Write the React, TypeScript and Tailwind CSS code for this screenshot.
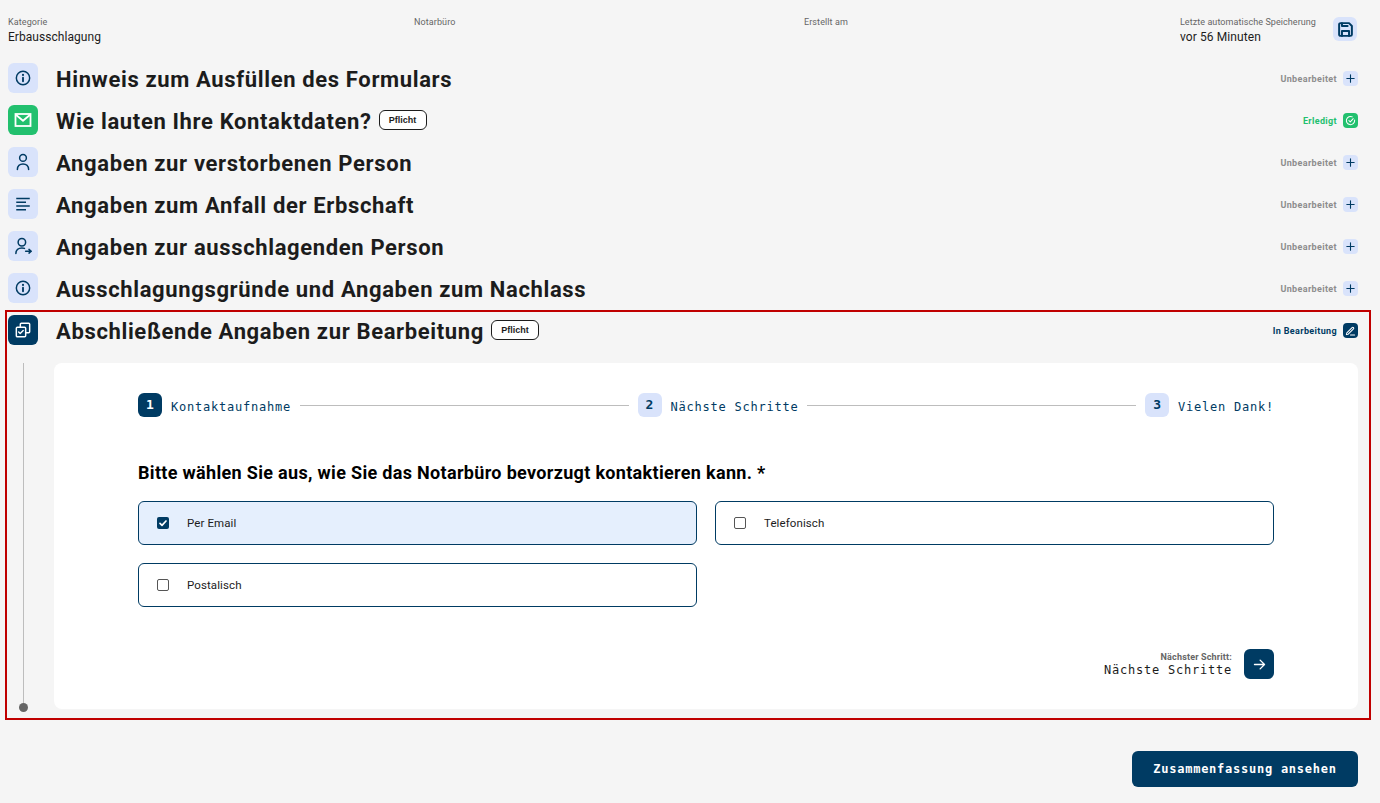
import React from "react";

const NAVY = "#003b63";

function Svg({ size = 16, children, color = NAVY, sw = 2 }: { size?: number; children: React.ReactNode; color?: string; sw?: number }) {
  return (
    <svg width={size} height={size} viewBox="0 0 24 24" fill="none" stroke={color} strokeWidth={sw} strokeLinecap="round" strokeLinejoin="round">
      {children}
    </svg>
  );
}

const InfoI = () => (
  <Svg sw={2.2}>
    <circle cx="12" cy="12" r="10" />
    <path d="M12 11.5v5.5" strokeWidth={2.8} />
    <path d="M12 7.4h.01" strokeWidth={3.2} />
  </Svg>
);
const MailI = () => (
  <Svg size={18} color="#fff" sw={2.4}>
    <rect x="2" y="4" width="20" height="16" strokeLinejoin="miter" />
    <path d="M2.5 5l9.5 8 9.5-8" strokeLinecap="butt" />
  </Svg>
);
const UserI = () => (
  <Svg size={18} sw={2}>
    <circle cx="12" cy="6.5" r="4.500" />
    <path d="M4.500 22c0-4.600 3.200-7.500 7.500-7.500s7.500 2.900 7.500 7.500" />
  </Svg>
);
const LinesI = () => (
  <Svg size={18} sw={2}>
    <path d="M3 4.500h18M3 9.500h13M3 14.500h18M3 19.500h13" strokeLinecap="butt" />
  </Svg>
);
const UserArrowI = () => (
  <Svg size={18} sw={2}>
    <circle cx="10.500" cy="7" r="5" />
    <path d="M2.500 22c0-4.600 3.500-7.500 8-7.500 1.300 0 2.500.2 3.500.7" />
    <path d="M15.500 19h7.500M20 16.500l3 2.500-3 2.500" />
  </Svg>
);
const CopyCheckI = () => (
  <Svg size={16} color="#fff" sw={2.200}>
    <rect x="2" y="8" width="14" height="14" rx="1.500" />
    <path d="M8 8V3.500C8 2.700 8.700 2 9.500 2h11c.8 0 1.500.7 1.500 1.500v11c0 .8-.7 1.500-1.500 1.500H16" />
    <path d="M5.500 15l2.300 2.300 4.500-4.500" />
  </Svg>
);
const SaveI = () => (
  <Svg size={17} sw={2.8}>
    <path d="M3 5c0-1.100.9-2 2-2h12l4 4v12c0 1.100-.9 2-2 2H5c-1.100 0-2-.9-2-2z" />
    <path d="M7 21v-7h10v7" />
    <path d="M7 3v4h8" />
  </Svg>
);
const PlusI = () => (
  <Svg size={11} sw={2.400}>
    <path d="M12 4v16M4 12h16" />
  </Svg>
);
const CheckCircleI = () => (
  <Svg size={11} color="#fff" sw={2.200}>
    <path d="M21 11v1a9 9 0 1 1-5-8" />
    <path d="M8.500 12l3 3 6.500-7" />
  </Svg>
);
const PencilI = () => (
  <Svg size={11} color="#fff" sw={2.200}>
    <path d="M4 17L15.500 5.500a2 2 0 0 1 3 3L7 20l-4 1z" />
    <path d="M12 22h9" />
  </Svg>
);

type Row = { title: string; icon: React.ReactNode; tone: "todo" | "done" | "edit"; pflicht?: boolean };
const rows: Row[] = [
  { title: "Hinweis zum Ausfüllen des Formulars", icon: <InfoI />, tone: "todo" },
  { title: "Wie lauten Ihre Kontaktdaten?", icon: <MailI />, tone: "done", pflicht: true },
  { title: "Angaben zur verstorbenen Person", icon: <UserI />, tone: "todo" },
  { title: "Angaben zum Anfall der Erbschaft", icon: <LinesI />, tone: "todo" },
  { title: "Angaben zur ausschlagenden Person", icon: <UserArrowI />, tone: "todo" },
  { title: "Ausschlagungsgründe und Angaben zum Nachlass", icon: <InfoI />, tone: "todo" },
];

function Pflicht() {
  return (
    <span className="ml-[7px] flex h-[20px] w-[48px] items-center justify-center rounded-[6px] border border-[#1c1c1c] bg-white pt-px font-['Liberation_Sans',sans-serif] text-[9px] font-bold text-[#1c1c1c]">
      Pflicht
    </span>
  );
}

function SectionRow({ title, icon, tone, pflicht }: Row) {
  const iconBg = tone === "done" ? "bg-[#22c06e]" : tone === "edit" ? "bg-[#003b63]" : "bg-[#d9e3fb]";
  const statusBg = tone === "done" ? "bg-[#22c06e]" : tone === "edit" ? "bg-[#003b63]" : "bg-[#d9e3fb]";
  const statusText = tone === "done" ? "text-[#22c06e]" : tone === "edit" ? "text-[#003b63]" : "text-[#8d8d8d]";
  const label = tone === "done" ? "Erledigt" : tone === "edit" ? "In Bearbeitung" : "Unbearbeitet";
  return (
    <div className="flex h-[30px] items-center">
      <div className={`flex h-[30px] w-[30px] shrink-0 items-center justify-center rounded-[6px] ${iconBg}`}>{icon}</div>
      <h2 className="ml-[18px] pt-[4px] text-[22px] font-bold leading-[30px] tracking-[0.64px] text-[#1c1c1c]">{title}</h2>
      {pflicht && <Pflicht />}
      <div className="ml-auto flex items-center gap-[6px]">
        <span className={`pt-[3px] text-[9px] font-bold tracking-[0.36px] ${statusText}`}>{label}</span>
        <span className={`flex h-[15px] w-[15px] items-center justify-center rounded-[4px] ${statusBg}`}>
          {tone === "todo" ? <PlusI /> : tone === "done" ? <CheckCircleI /> : <PencilI />}
        </span>
      </div>
    </div>
  );
}

function Step({ n, label, active }: { n: number; label: string; active?: boolean }) {
  return (
    <div className="flex shrink-0 items-center gap-[9px]">
      <span
        className={`flex h-[24px] w-[24px] items-center justify-center rounded-[6px] font-['DejaVu_Sans_Mono',monospace] text-[13px] font-bold ${
          active ? "bg-[#003b63] text-white" : "bg-[#d9e3fb] text-[#003b63]"
        }`}
      >
        {n}
      </span>
      <span className="pt-[3px] font-['DejaVu_Sans_Mono',monospace] text-[12px] tracking-[0.77px] text-[#003b63]">{label}</span>
    </div>
  );
}

function Option({ label, checked }: { label: string; checked?: boolean }) {
  return (
    <div
      className={`flex h-[44px] items-center rounded-[6px] border border-[#003b63] pl-[18px] ${
        checked ? "bg-[#e5effd]" : "bg-white"
      }`}
    >
      {checked ? (
        <span className="flex h-[12px] w-[12px] items-center justify-center rounded-[2px] bg-[#003b63]">
          <svg width="8" height="8" viewBox="0 0 24 24" fill="none" stroke="#fff" strokeWidth={5} strokeLinecap="round" strokeLinejoin="round">
            <path d="M3 13l6 6L21 6" />
          </svg>
        </span>
      ) : (
        <span className="h-[12px] w-[12px] rounded-[2px] border border-[#555] bg-white" />
      )}
      <span className="ml-[18px] pt-[2px] text-[11.5px] tracking-[0.1px] text-[#1c1c1c]">{label}</span>
    </div>
  );
}

export default function App() {
  return (
    <div className="h-[803px] overflow-hidden bg-[#f5f5f5] pl-[8px] pr-[22px] pt-[17px] font-['Roboto',sans-serif]">
      <header className="grid h-[25px] grid-cols-[406px_390px_1fr_auto] items-start">
        <div>
          <div className="text-[9px] leading-[10px] tracking-[0.1px] text-[#666]">Kategorie</div>
          <div className="mt-[3px] text-[12px] leading-[14px] tracking-[0.05px] text-[#1c1c1c]">Erbausschlagung</div>
        </div>
        <div className="text-[9px] leading-[10px] tracking-[0.1px] text-[#666]">Notarbüro</div>
        <div className="text-[9px] leading-[10px] tracking-[0.1px] text-[#666]">Erstellt am</div>
        <div className="flex items-start gap-[17px]">
          <div>
            <div className="text-[9px] leading-[10px] tracking-[0.07px] text-[#666]">Letzte automatische Speicherung</div>
            <div className="mt-[3px] text-[12px] leading-[14px] tracking-[0.1px] text-[#1c1c1c]">vor 56 Minuten</div>
          </div>
          <button className="mr-[1px] flex h-[24px] w-[24px] items-center justify-center rounded-[6px] bg-[#d9e3fb]">
            <SaveI />
          </button>
        </div>
      </header>

      <div className="mt-[21px] flex flex-col gap-[12px]">
        {rows.map((r) => (
          <SectionRow key={r.title} {...r} />
        ))}
      </div>

      <section className="ml-[-3px] mr-[-13px] mt-[7px] h-[410px] border-2 border-[#c00000] pl-[1px] pr-[11px] pt-[3px]">
        <SectionRow title="Abschließende Angaben zur Bearbeitung" icon={<CopyCheckI />} tone="edit" pflicht />
        <div className="mt-[18px] flex h-[346px]">
          <div className="mb-[-3px] flex w-[30px] shrink-0 flex-col items-center">
            <div className="w-px flex-1 bg-[#bdbdbd]" />
            <div className="h-[9px] w-[9px] rounded-full bg-[#666]" />
          </div>
          <div className="ml-[16px] flex-1 rounded-[8px] bg-white px-[84px] pt-[30px]">
            <div className="flex items-center">
              <Step n={1} label="Kontaktaufnahme" active />
              <div className="mx-[9px] h-px flex-1 bg-[#bdbdbd]" />
              <Step n={2} label="Nächste Schritte" />
              <div className="mx-[9px] h-px flex-1 bg-[#bdbdbd]" />
              <Step n={3} label="Vielen Dank!" />
            </div>
            <h3 className="mt-[43px] pt-[2px] text-[18px] font-bold leading-[22px] tracking-[0.32px] text-black">
              Bitte wählen Sie aus, wie Sie das Notarbüro bevorzugt kontaktieren kann. *
            </h3>
            <div className="mt-[17px] grid grid-cols-2 gap-[18px]">
              <Option label="Per Email" checked />
              <Option label="Telefonisch" />
              <Option label="Postalisch" />
            </div>
            <div className="mt-[42px] flex items-center justify-end gap-[12px]">
              <div className="text-right">
                <div className="pt-px text-[9px] font-bold leading-[10px] tracking-[0.17px] text-[#666]">Nächster Schritt:</div>
                <div className="mt-[1px] font-['DejaVu_Sans_Mono',monospace] text-[12px] leading-[14px] tracking-[0.77px] text-[#1c1c1c]">Nächste Schritte</div>
              </div>
              <button className="flex h-[30px] w-[30px] items-center justify-center rounded-[6px] bg-[#003b63]">
                <svg width="15" height="15" viewBox="0 0 24 24" fill="none" stroke="#fff" strokeWidth={2.200} strokeLinecap="round" strokeLinejoin="round">
                  <path d="M4 12h16M13 5l7 7-7 7" />
                </svg>
              </button>
            </div>
          </div>
        </div>
      </section>

      <div className="mt-[31px] flex justify-end">
        <button className="h-[36px] w-[226px] rounded-[6px] bg-[#003b63] font-['DejaVu_Sans_Mono',monospace] text-[12px] font-bold tracking-[0.75px] text-white">
          Zusammenfassung ansehen
        </button>
      </div>
    </div>
  );
}
